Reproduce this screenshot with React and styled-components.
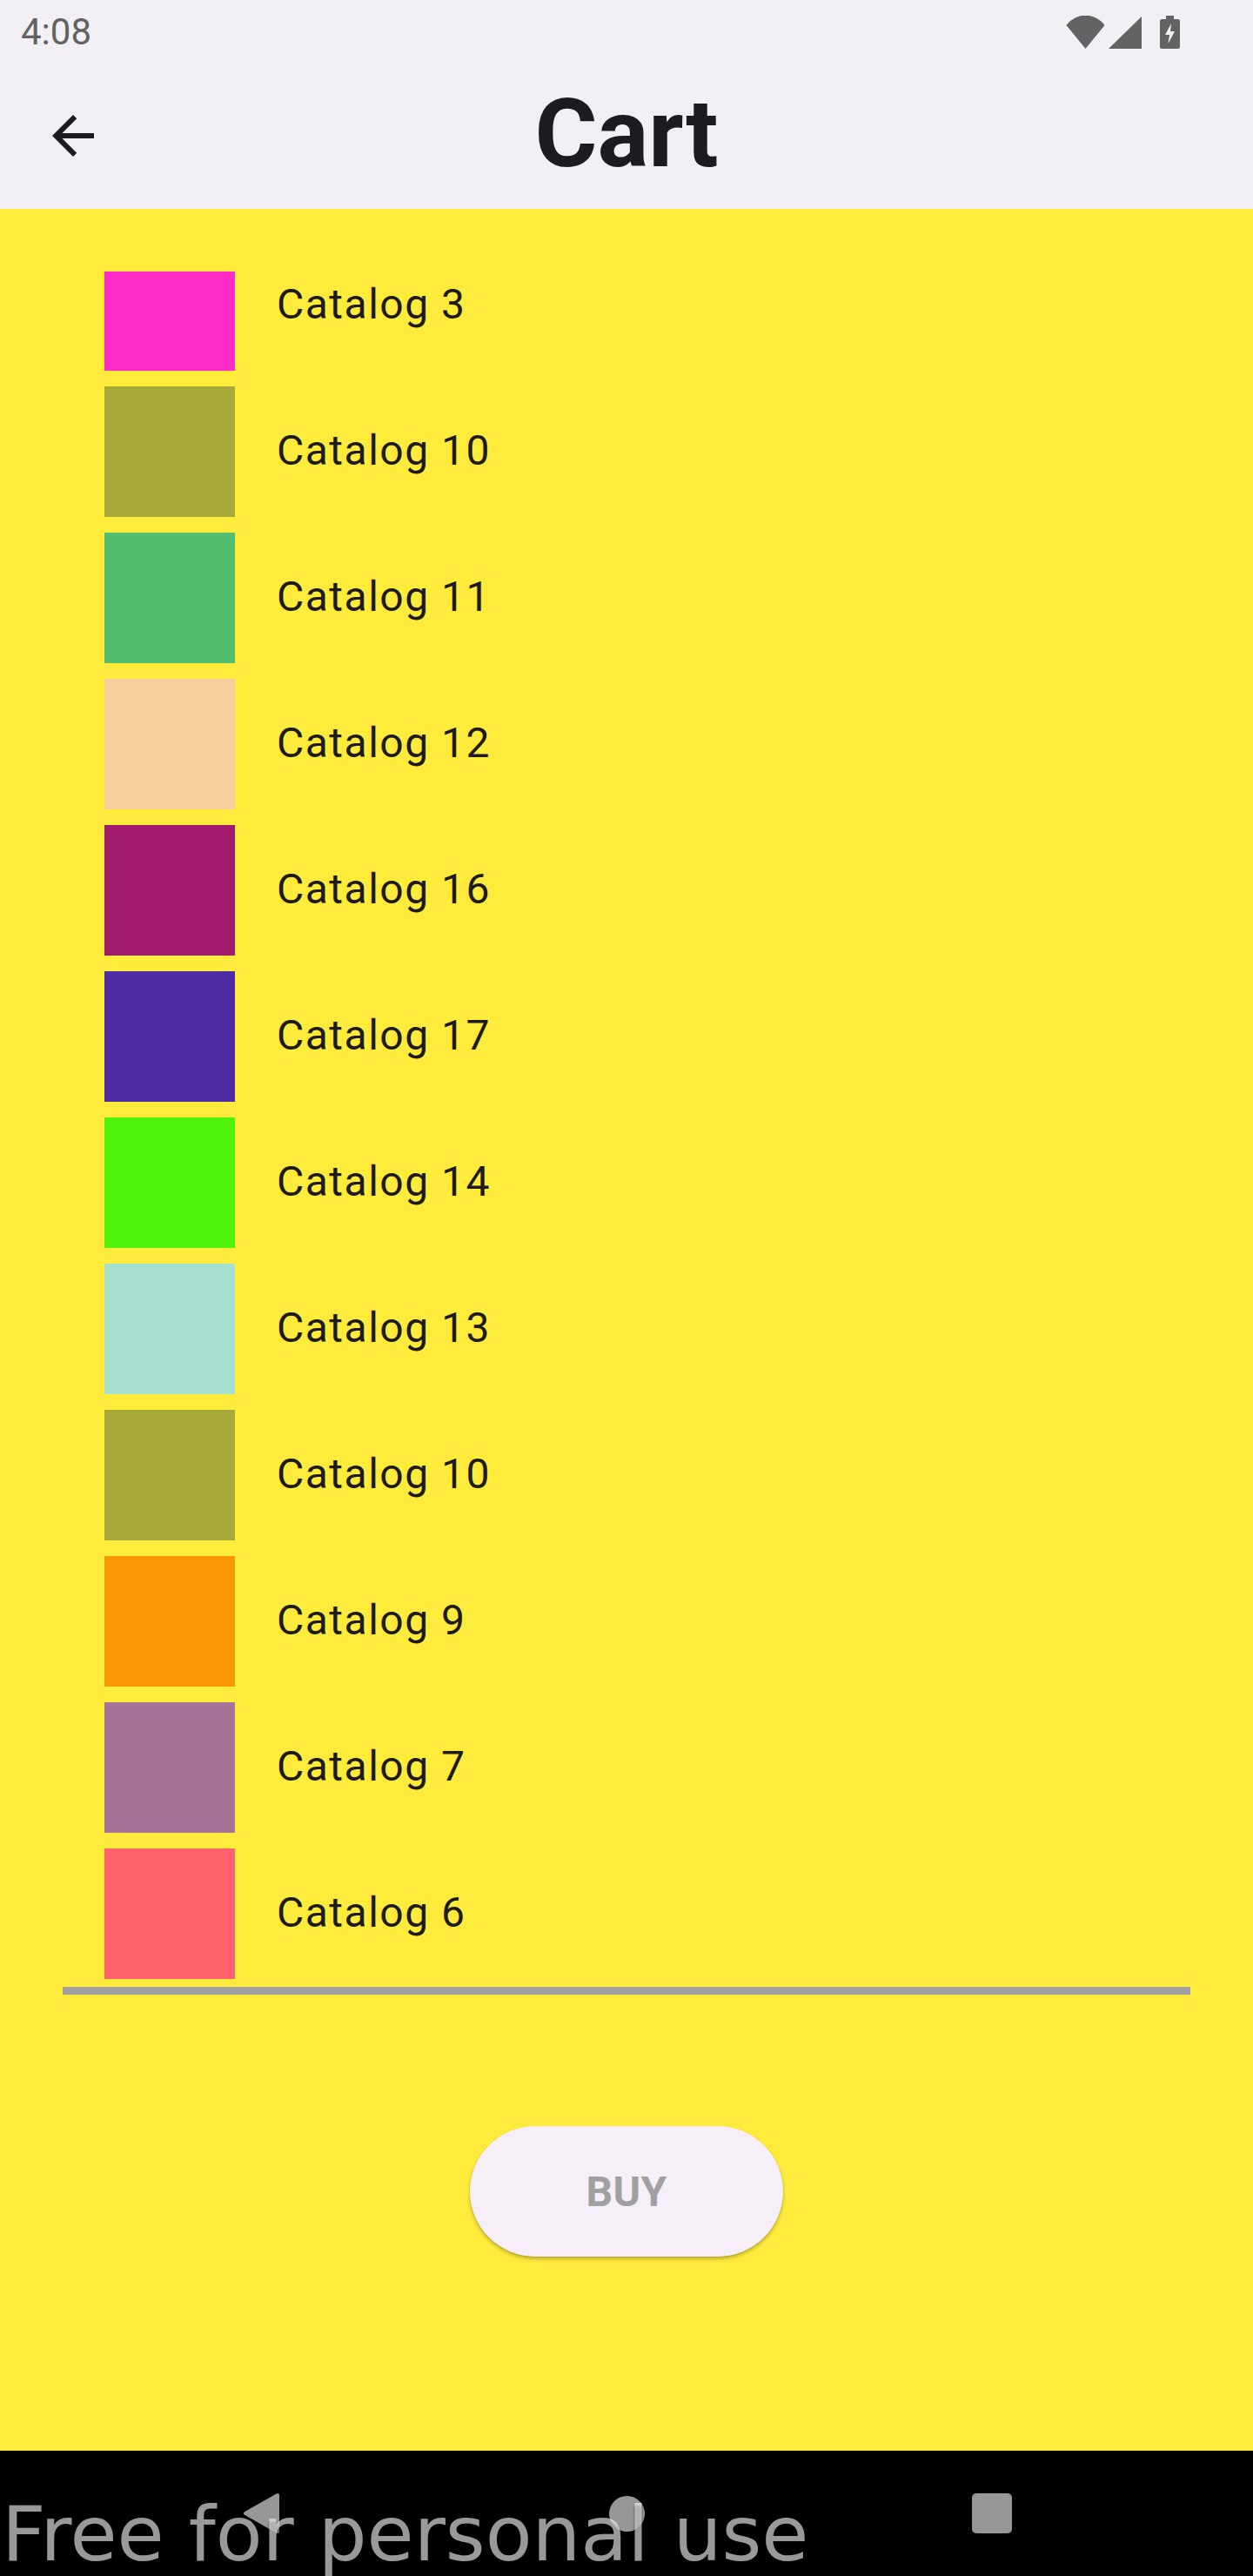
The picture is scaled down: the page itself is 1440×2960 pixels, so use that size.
import React from "react";
import styled, { createGlobalStyle } from "styled-components";

const GlobalStyle = createGlobalStyle`
  html, body {
    margin: 0;
    padding: 0;
    background: #000;
  }
  * { box-sizing: border-box; }
`;

const Screen = styled.div`
  position: relative;
  width: 1440px;
  height: 2960px;
  overflow: hidden;
  display: flex;
  flex-direction: column;
  font-family: Roboto, "Noto Sans", sans-serif;
`;

const StatusBar = styled.div`
  height: 72px;
  flex-shrink: 0;
  background: #f3f0f5;
  display: flex;
  align-items: center;
  justify-content: space-between;
  padding: 0 84px 0 24px;
`;

const Clock = styled.span`
  font-size: 42px;
  line-height: 1;
  color: #616161;
  margin-top: 2px;
`;

const StatusIcons = styled.div`
  display: flex;
  align-items: center;
  gap: 4px;
  margin-top: 2px;
`;

const AppBar = styled.header`
  height: 168px;
  flex-shrink: 0;
  background: #f3f0f5;
  display: grid;
  grid-template-columns: 1fr auto 1fr;
  align-items: center;
`;

const BackButton = styled.button`
  justify-self: start;
  margin-left: 48px;
  width: 72px;
  height: 72px;
  padding: 0;
  border: none;
  background: transparent;
  display: flex;
  align-items: center;
  justify-content: center;
`;

const Title = styled.h1`
  margin: 0;
  font-family: Roboto, sans-serif;
  font-weight: 700;
  font-size: 110px;
  line-height: 1;
  color: #1d1b20;
  margin-bottom: 4px;
`;

const Body = styled.main`
  flex: 1;
  background: #ffeb3b;
  display: flex;
  flex-direction: column;
  padding-top: 72px;
`;

const ListViewport = styled.ul`
  list-style: none;
  margin: 0 72px;
  padding: 0;
  height: 1971px;
  overflow: hidden;
  display: flex;
  flex-direction: column;
  justify-content: flex-end;
`;

const Row = styled.li`
  flex-shrink: 0;
  height: 168px;
  display: flex;
  align-items: center;
  padding-left: 48px;
`;

const Swatch = styled.div`
  width: 150px;
  height: 150px;
  flex-shrink: 0;
  background: ${(p) => p.$color};
`;

const ItemLabel = styled.span`
  margin-left: 48px;
  font-family: Roboto, sans-serif;
  font-size: 48px;
  letter-spacing: 1.5px;
  line-height: 1;
  color: #1d1b20;
  margin-bottom: 3px;
`;

const Divider = styled.div`
  height: 9px;
  margin: 0 72px;
  background: #a0a0a0;
`;

const ButtonArea = styled.div`
  display: flex;
  justify-content: center;
  padding-top: 151px;
`;

const BuyButton = styled.button`
  width: 360px;
  height: 150px;
  border: none;
  border-radius: 75px;
  background: #f7eff8;
  box-shadow: 0 3px 4px rgba(0, 0, 0, 0.22), 0 1px 2px rgba(0, 0, 0, 0.12);
  font-family: Roboto, sans-serif;
  font-weight: 700;
  font-size: 48px;
  letter-spacing: 0.3px;
  color: #a0a0a0;
  display: flex;
  align-items: center;
  justify-content: center;
  padding: 0;
`;

const NavBar = styled.nav`
  height: 144px;
  flex-shrink: 0;
  background: #000;
  display: grid;
  grid-template-columns: repeat(3, 420px);
  justify-content: center;
  align-items: center;
  justify-items: center;
`;

const NavCircle = styled.div`
  width: 41px;
  height: 41px;
  border-radius: 50%;
  background: #979797;
`;

const NavSquare = styled.div`
  width: 46px;
  height: 46px;
  border-radius: 5px;
  background: #979797;
`;

const Watermark = styled.div`
  position: absolute;
  left: 2px;
  top: 2868px;
  font-family: "DejaVu Sans", sans-serif;
  font-size: 88px;
  line-height: 1;
  color: rgba(255, 255, 255, 0.6);
  text-shadow: 0 3px 3px rgba(0, 0, 0, 0.6);
  white-space: nowrap;
  pointer-events: none;
`;

const items = [
  { name: "Catalog 3", color: "#ff2bc8" },
  { name: "Catalog 10", color: "#a6a938" },
  { name: "Catalog 11", color: "#52bd6d" },
  { name: "Catalog 12", color: "#f6cd9c" },
  { name: "Catalog 16", color: "#a21a6b" },
  { name: "Catalog 17", color: "#4d2ca3" },
  { name: "Catalog 14", color: "#51f30d" },
  { name: "Catalog 13", color: "#a4dfd1" },
  { name: "Catalog 10", color: "#a6a938" },
  { name: "Catalog 9", color: "#f99706" },
  { name: "Catalog 7", color: "#a67399" },
  { name: "Catalog 6", color: "#fe626a" },
];

const WifiIcon = () => (
  <svg width="45" height="38" viewBox="0 0 45 38">
    <path d="M0.5 11 A27 27 0 0 1 44.5 11 L22.5 38 Z" fill="#636363" />
  </svg>
);

const SignalIcon = () => (
  <svg width="38" height="38" viewBox="0 0 38 38">
    <path d="M0 38 L38 38 L38 1 Z" fill="#636363" />
  </svg>
);

const BatteryIcon = () => (
  <svg width="23" height="38" viewBox="0 0 23 38" style={{ marginLeft: 17 }}>
    <rect x="7" y="0" width="9" height="5" fill="#636363" />
    <rect x="0" y="4" width="23" height="34" rx="2.5" fill="#636363" />
    <path d="M13 9 L6 22 L11 22 L9.5 32 L17 18 L12 18 Z" fill="#f3f0f5" />
  </svg>
);

const BackArrow = () => (
  <svg width="72" height="72" viewBox="0 0 24 24">
    <path
      d="M20 11H7.83l5.59-5.59L12 4l-8 8 8 8 1.41-1.41L7.83 13H20v-2z"
      fill="#1d1b20"
    />
  </svg>
);

const NavBack = () => (
  <svg width="43" height="48" viewBox="0 0 43 48">
    <path
      d="M40 3 L3 24 L40 45 Z"
      fill="#979797"
      stroke="#979797"
      strokeWidth="4"
      strokeLinejoin="round"
    />
  </svg>
);

export default function App() {
  return (
    <>
      <GlobalStyle />
      <Screen>
        <StatusBar>
          <Clock>4:08</Clock>
          <StatusIcons>
            <WifiIcon />
            <SignalIcon />
            <BatteryIcon />
          </StatusIcons>
        </StatusBar>
        <AppBar>
          <BackButton aria-label="Back">
            <BackArrow />
          </BackButton>
          <Title>Cart</Title>
          <div />
        </AppBar>
        <Body>
          <ListViewport>
            {items.map((it, i) => (
              <Row key={i}>
                <Swatch $color={it.color} />
                <ItemLabel>{it.name}</ItemLabel>
              </Row>
            ))}
          </ListViewport>
          <Divider />
          <ButtonArea>
            <BuyButton>BUY</BuyButton>
          </ButtonArea>
        </Body>
        <NavBar>
          <NavBack />
          <NavCircle />
          <NavSquare />
        </NavBar>
        <Watermark>Free for personal use</Watermark>
      </Screen>
    </>
  );
}
